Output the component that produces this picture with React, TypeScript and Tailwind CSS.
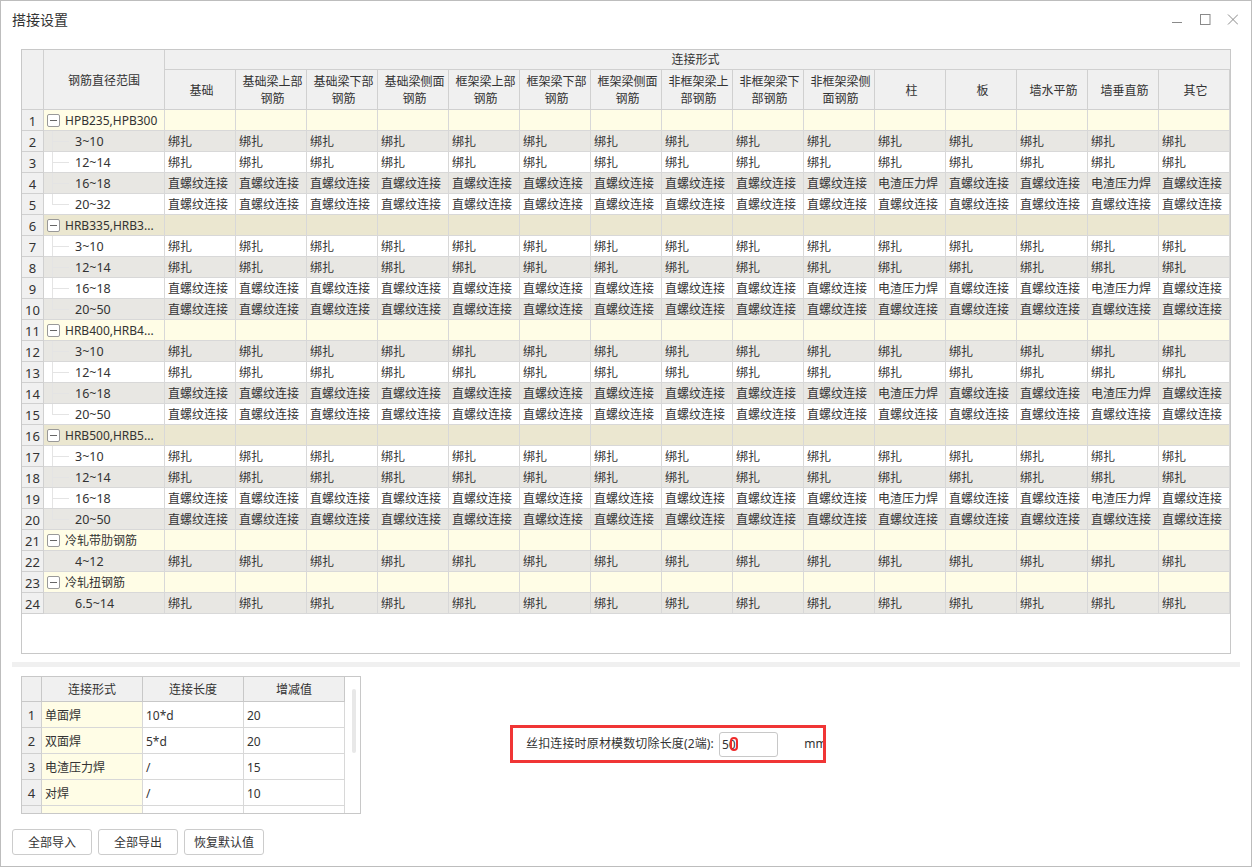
const font = "[font-family:'Noto_Sans','Noto_Sans_CJK_SC',sans-serif]";

const columns = [
  ["基础"],
  ["基础梁上部", "钢筋"],
  ["基础梁下部", "钢筋"],
  ["基础梁侧面", "钢筋"],
  ["框架梁上部", "钢筋"],
  ["框架梁下部", "钢筋"],
  ["框架梁侧面", "钢筋"],
  ["非框架梁上", "部钢筋"],
  ["非框架梁下", "部钢筋"],
  ["非框架梁侧", "面钢筋"],
  ["柱"],
  ["板"],
  ["墙水平筋"],
  ["墙垂直筋"],
  ["其它"],
];

type Row =
  | { group: string }
  | { range: string; kind: "tie" | "thread" | "mixed"; line?: boolean; end?: boolean };

const rows: Row[] = [
  { group: "HPB235,HPB300" },
  { range: "3~10", kind: "tie", line: true },
  { range: "12~14", kind: "tie", line: true },
  { range: "16~18", kind: "mixed", line: true },
  { range: "20~32", kind: "thread", line: true, end: true },
  { group: "HRB335,HRB3..." },
  { range: "3~10", kind: "tie", line: true },
  { range: "12~14", kind: "tie", line: true },
  { range: "16~18", kind: "mixed", line: true },
  { range: "20~50", kind: "thread", line: true, end: true },
  { group: "HRB400,HRB4..." },
  { range: "3~10", kind: "tie", line: true },
  { range: "12~14", kind: "tie", line: true },
  { range: "16~18", kind: "mixed", line: true },
  { range: "20~50", kind: "thread", line: true, end: true },
  { group: "HRB500,HRB5..." },
  { range: "3~10", kind: "tie", line: true },
  { range: "12~14", kind: "tie", line: true },
  { range: "16~18", kind: "mixed", line: true },
  { range: "20~50", kind: "thread", line: true, end: true },
  { group: "冷轧带肋钢筋" },
  { range: "4~12", kind: "tie" },
  { group: "冷轧扭钢筋" },
  { range: "6.5~14", kind: "tie" },
];

const cellText = (kind: string, col: number) => {
  if (kind === "tie") return "绑扎";
  if (kind === "mixed" && (col === 10 || col === 13)) return "电渣压力焊";
  return "直螺纹连接";
};

const GroupToggle = () => (
  <span className="flex h-[13px] w-[13px] shrink-0 items-center justify-center rounded-[2px] border border-[#999] bg-white">
    <span className="h-px w-[7px] bg-[#666]" />
  </span>
);

const WindowButtons = () => (
  <svg width="68" height="12" viewBox="0 0 68 12" fill="none" stroke="#8a8a8a" strokeWidth="1">
    <path d="M2 8.5H12" />
    <rect x="30.5" y="0.5" width="9.5" height="10" />
    <path d="M58 0.5L68 10.5M68 0.5L58 10.5" />
  </svg>
);

const MainTable = () => (
  <div className="h-[605px] w-[1210px] overflow-hidden border border-[#c8c8c8] bg-white">
    <div className="grid grid-cols-[22px_121px_repeat(15,71px)] grid-rows-[20px_40px] bg-[#f0f0f0] text-center">
      <div className="row-span-2 border-r border-b border-[#d0d0d0]" />
      <div className="row-span-2 border-r border-b border-[#d0d0d0] pt-[22px] leading-[17px]">钢筋直径范围</div>
      <div className="col-span-15 border-b border-[#d0d0d0] pr-[4px] leading-[19px]">连接形式</div>
      {columns.map((lines) => (
        <div
          key={lines.join("")}
          className="flex flex-col items-center justify-center border-r border-b border-[#d0d0d0] pt-px pl-[3px] leading-[17px] whitespace-nowrap"
        >
          {lines.map((line) => (
            <span key={line}>{line}</span>
          ))}
        </div>
      ))}
    </div>
    {rows.map((row, index) => {
      const num = index + 1;
      const even = num % 2 === 0;
      const isGroup = "group" in row;
      const bg = isGroup
        ? even
          ? "bg-[#ebe7d0]"
          : "bg-[#fffde6]"
        : even
          ? "bg-[#e8e7e3]"
          : "bg-white";
      return (
        <div
          key={num}
          className={`grid h-[21px] grid-cols-[22px_121px_repeat(15,71px)] leading-[18px] ${bg}`}
        >
          <div className="border-r border-b border-[#d0d0d0] bg-[#f0f0f0] pt-[2px] text-center text-[13px]">{num}</div>
          <div className="relative flex h-[21px] items-center border-r border-b border-[#d8d8d8] whitespace-nowrap">
            {isGroup ? (
              <div className="flex items-center gap-[5px] pl-[3px]">
                <GroupToggle />
                <span className="pt-[2px]">{row.group}</span>
              </div>
            ) : (
              <>
                {row.line && (
                  <>
                    <span className={`absolute top-0 left-[8px] w-px bg-[#e4e4e4] ${row.end ? "h-[10px]" : "h-[20px]"}`} />
                    <span className="absolute top-[10px] left-[8px] h-px w-[17px] bg-[#e4e4e4]" />
                  </>
                )}
                <span className="pt-[2px] pl-[31px] text-[12.5px]">{row.range}</span>
              </>
            )}
          </div>
          {columns.map((_, col) => (
            <div key={col} className="overflow-hidden border-r border-b border-[#d8d8d8] pt-[2px] pl-[3px] whitespace-nowrap">
              {!isGroup && cellText(row.kind, col)}
            </div>
          ))}
        </div>
      );
    })}
  </div>
);

const lapRows = [
  ["单面焊", "10*d", "20"],
  ["双面焊", "5*d", "20"],
  ["电渣压力焊", "/", "15"],
  ["对焊", "/", "10"],
  ["", "", ""],
];

const LapTable = () => (
  <div className="relative h-[138px] w-[340px] overflow-hidden border border-[#c8c8c8] bg-white">
    <div className="grid h-[25px] w-[323px] grid-cols-[20px_101px_101px_101px] bg-[#f0f0f0] text-center leading-[22px]">
      <div className="border-r border-b border-[#c8c8c8]" />
      <div className="border-r border-b border-[#c8c8c8] pt-[2px]">连接形式</div>
      <div className="border-r border-b border-[#c8c8c8] pt-[2px]">连接长度</div>
      <div className="border-r border-b border-[#c8c8c8] pt-[2px]">增减值</div>
    </div>
    {lapRows.map(([name, len, delta], index) => (
      <div key={index} className="grid h-[26px] w-[323px] grid-cols-[20px_101px_101px_101px] leading-[23px]">
        <div className="border-r border-b border-[#d0d0d0] bg-[#f0f0f0] pt-[2px] text-center text-[13px]">{name ? index + 1 : ""}</div>
        <div className="border-r border-b border-[#d8d8d8] bg-[#fffde6] pt-[2px] pl-[3px]">{name}</div>
        <div className="border-r border-b border-[#d8d8d8] pt-[2px] pl-[3px]">{len}</div>
        <div className="border-r border-b border-[#d8d8d8] pt-[2px] pl-[3px]">{delta}</div>
      </div>
    ))}
    <div className="absolute top-[12px] left-[330px] h-[64px] w-[4px] rounded-full bg-[#e8e8e8]" />
  </div>
);

const FootButton = ({ label }: { label: string }) => (
  <button className="h-[26px] w-[80px] rounded-[3px] border border-[#cccccc] bg-white pt-[2px] text-[#333]">{label}</button>
);

export default function App() {
  return (
    <div className={`flex h-[867px] w-[1252px] flex-col border border-[#bdbdbd] bg-white text-[12px] text-[#333] ${font}`}>
      <div className="flex h-[48px] shrink-0 items-start justify-between pt-[9px] pr-[13px] pl-[11px]">
        <span className="text-[14px] leading-[20px]">搭接设置</span>
        <div className="pt-[4px]">
          <WindowButtons />
        </div>
      </div>
      <div className="pl-[20px]">
        <MainTable />
      </div>
      <div className="mt-[8px] ml-[11px] h-[5px] w-[1228px] bg-[#f0f0f0]" />
      <div className="mt-[9px] flex pl-[20px]">
        <LapTable />
        <div className="mt-[49px] ml-[149px] flex h-[38px] w-[316px] items-center border-[3px] border-[#f03535] pl-[13px]">
          <span className="tracking-[0.15px] whitespace-nowrap">丝扣连接时原材模数切除长度(2端):</span>
          <div className="relative ml-[5px] h-[25px] w-[60px] rounded-[3px] border border-[#c8c8c8] pl-[2px] leading-[24px]">
            50
            <span className="absolute top-[4px] left-[10px] h-[14px] w-[8px] rounded-full border-2 border-[#ef2b2b]" />
          </div>
          <span className="ml-[26px] w-[19px] overflow-hidden">mm</span>
        </div>
      </div>
      <div className="mt-[15px] flex gap-[6px] pl-[11px]">
        <FootButton label="全部导入" />
        <FootButton label="全部导出" />
        <FootButton label="恢复默认值" />
      </div>
    </div>
  );
}
